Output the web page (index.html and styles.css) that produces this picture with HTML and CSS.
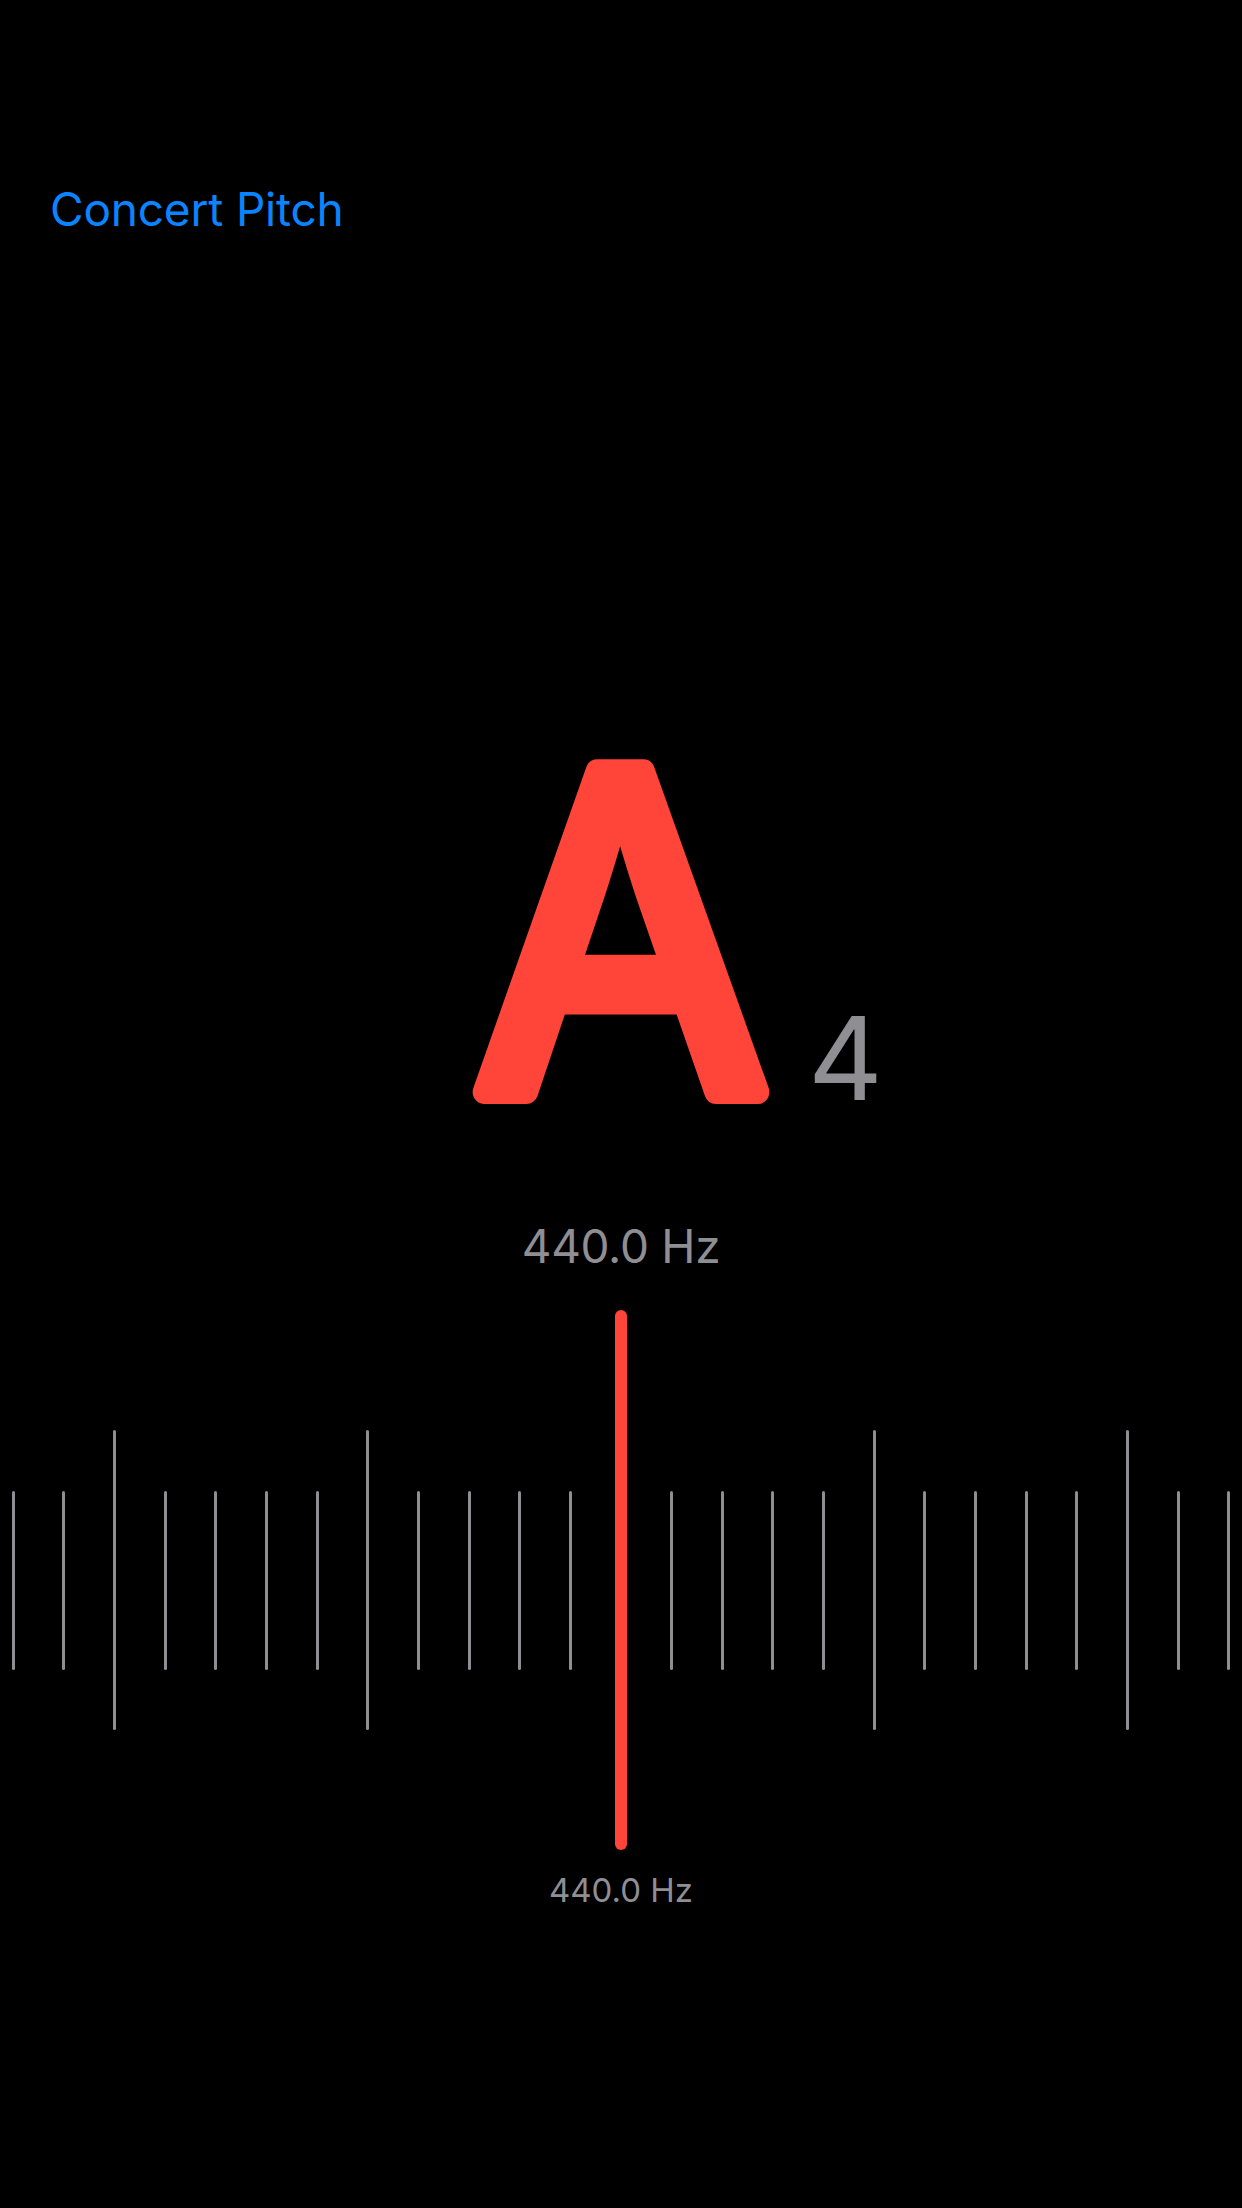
FILE: index.html
```html
<!DOCTYPE html>
<html lang="en">
<head>
<meta charset="utf-8">
<title>Tuner</title>
<link rel="stylesheet" href="styles.css">
</head>
<body>
<div class="screen">
  <header class="top-bar">
    <span class="concert-pitch">Concert Pitch</span>
  </header>

  <div class="note-row">
    <svg class="note-svg" width="320" height="360" viewBox="0 0 320 360">
      <text class="note-name" x="160" y="348" text-anchor="middle" transform="translate(160 0) scale(0.97 1) translate(-160 0)">A</text>
    </svg>
    <span class="octave"><span class="octave-text">4</span></span>
  </div>

  <div class="freq-main">440.0 Hz</div>

  <div class="meter">
    <div class="ticks">
      <span class="tick"></span>
      <span class="tick"></span>
      <span class="tick long"></span>
      <span class="tick"></span>
      <span class="tick"></span>
      <span class="tick"></span>
      <span class="tick"></span>
      <span class="tick long"></span>
      <span class="tick"></span>
      <span class="tick"></span>
      <span class="tick"></span>
      <span class="tick"></span>
      <span class="tick long"></span>
      <span class="tick"></span>
      <span class="tick"></span>
      <span class="tick"></span>
      <span class="tick"></span>
      <span class="tick long"></span>
      <span class="tick"></span>
      <span class="tick"></span>
      <span class="tick"></span>
      <span class="tick"></span>
      <span class="tick long"></span>
      <span class="tick"></span>
      <span class="tick"></span>
    </div>
    <div class="needle"></div>
  </div>

  <div class="freq-small">440.0 Hz</div>
</div>
</body>
</html>
```

FILE: styles.css
```css
html, body {
  margin: 0;
  padding: 0;
  background: #000;
}

.screen {
  width: 1242px;
  height: 2208px;
  background: #000;
  display: flex;
  flex-direction: column;
  font-family: "Inter", "Noto Sans", sans-serif;
  overflow: hidden;
}

.top-bar {
  padding: 179px 0 0 50px;
  height: 60px;
  display: flex;
  align-items: center;
}

.concert-pitch {
  color: #0a84ff;
  font-size: 46px;
  line-height: 60px;
  letter-spacing: -0.2px;
  font-weight: 400;
}

.note-row {
  margin-top: 505px;
  height: 360px;
  display: flex;
  justify-content: center;
  align-items: flex-end;
}

.note-svg {
  display: block;
  overflow: visible;
}

.note-name {
  font-family: "Inter", "Noto Sans", sans-serif;
  font-size: 441px;
  font-weight: 400;
  fill: #ff453a;
  stroke: #ff453a;
  stroke-width: 24px;
  stroke-linejoin: round;
  stroke-linecap: round;
}

.octave {
  width: 0;
  white-space: nowrap;
  overflow: visible;
}

.octave-text {
  display: block;
  margin-left: 27px;
  color: #8e8e93;
  font-size: 116px;
  line-height: 92px;
  font-weight: 400;
}

.freq-main {
  margin-top: 112px;
  height: 60px;
  line-height: 60px;
  text-align: center;
  color: #8e8e93;
  font-size: 46px;
  letter-spacing: -0.3px;
}

.meter {
  position: relative;
  margin-top: 34px;
  height: 540px;
  display: flex;
  align-items: center;
}

.ticks {
  flex: 1;
  display: flex;
  justify-content: space-between;
  align-items: center;
  padding: 0 11.8px;
}

.tick {
  width: 3px;
  height: 179px;
  background: #8e8e93;
  border-radius: 1.5px;
}

.tick.long {
  height: 300px;
}

.needle {
  position: absolute;
  left: 615px;
  top: 0;
  width: 12px;
  height: 540px;
  border-radius: 6px;
  background: #ff453a;
}

.freq-small {
  margin-top: 18px;
  height: 44px;
  line-height: 44px;
  text-align: center;
  color: #8e8e93;
  font-size: 33px;
}
```
